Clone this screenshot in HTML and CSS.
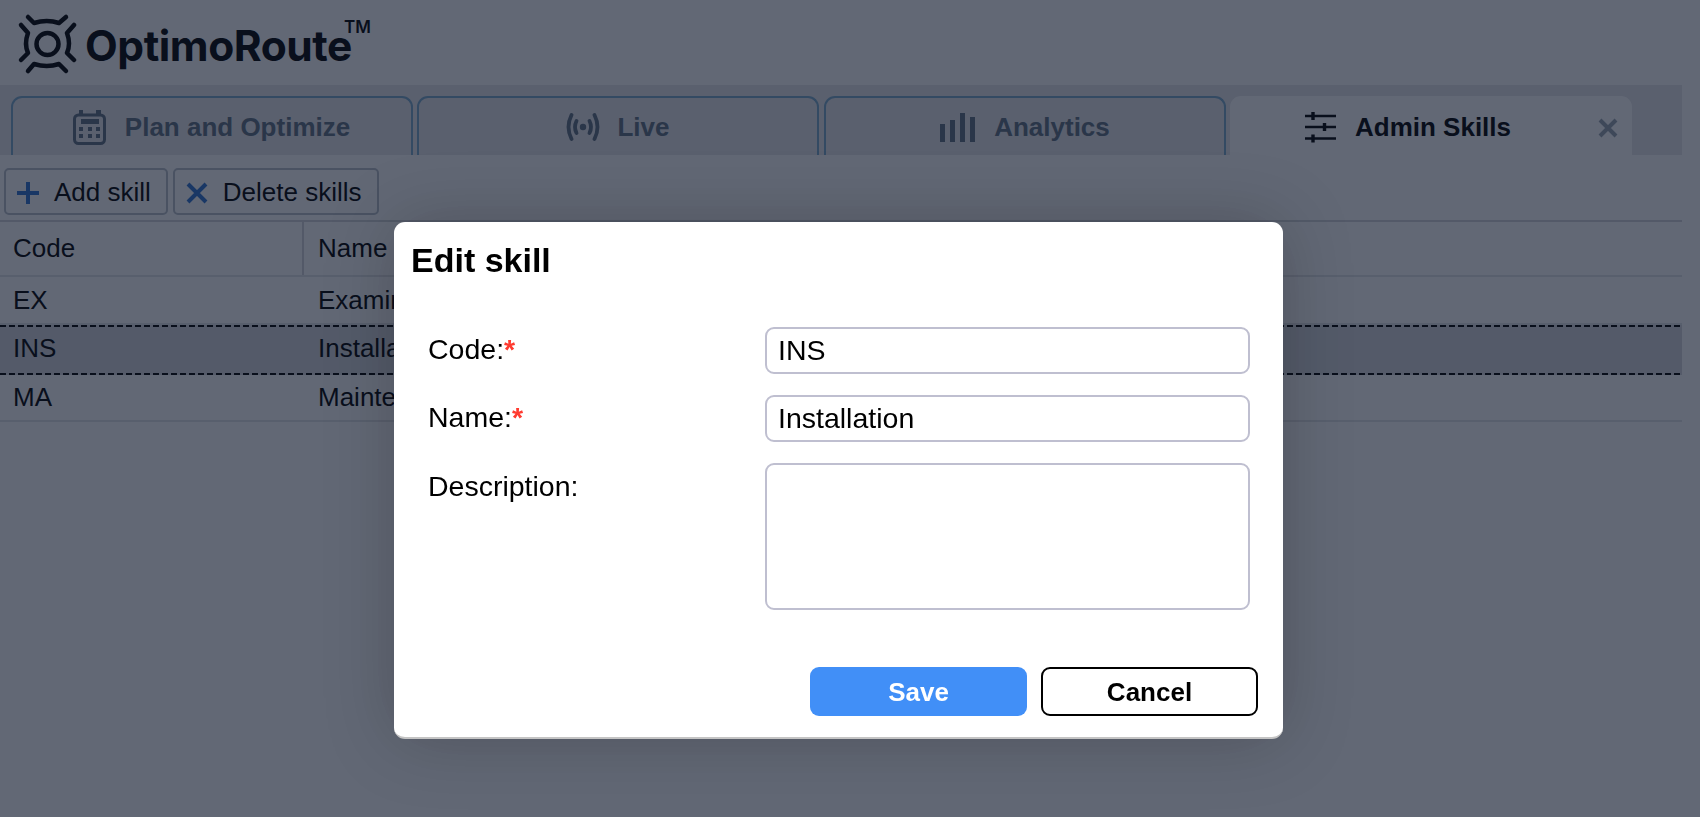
FILE: index.html
```html
<!DOCTYPE html>
<html lang="en">
<head>
<meta charset="utf-8">
<title>OptimoRoute - Admin Skills</title>
<link rel="stylesheet" href="styles.css">
</head>
<body>
<div class="app">
  <header class="brand">
    <svg class="logo-mark" viewBox="0 0 60 64" aria-hidden="true">
      <g fill="none" stroke="#000" stroke-width="4.5" stroke-linecap="round" stroke-linejoin="round">
        <circle cx="30.5" cy="32" r="11"/>
        <path d="M11 5l6 6Q30 7 42 11l7-6"/>
        <path d="M11 59l6-7Q30 56 42 52l7 7"/>
        <path d="M4 13l7 8Q7 32 11 41l-7 7"/>
        <path d="M57 13l-7 8Q54 32 50 41l7 7"/>
      </g>
    </svg>
    <span class="logo-text">OptimoRoute</span><sup class="logo-tm">TM</sup>
  </header>

  <nav class="tabs">
    <div class="tab">
      <svg class="tab-icon tab-icon-cal" viewBox="0 0 33 35" aria-hidden="true">
        <rect x="1.5" y="5" width="30" height="28.5" rx="4" fill="none" stroke="currentColor" stroke-width="3"/>
        <path d="M6 0h4v5H6zM23 0h5v5h-5z" fill="currentColor"/>
        <rect x="8" y="9" width="18" height="5" fill="currentColor"/>
        <path d="M6 17h4v4H6zM15 17h4v4h-4zM23 17h4v4h-4zM6 24h4v4H6zM15 24h4v4h-4zM23 24h4v4h-4z" fill="currentColor"/>
      </svg>
      <span>Plan and Optimize</span>
    </div>
    <div class="tab">
      <svg class="tab-icon tab-icon-live" viewBox="0 0 34 28" aria-hidden="true">
        <g fill="none" stroke="currentColor" stroke-width="3.8" stroke-linecap="round">
          <path d="M5.5 2Q-.5 14 5.5 26"/>
          <path d="M28.5 2Q34.5 14 28.5 26"/>
          <path d="M10.5 8Q7.5 14 10.5 20"/>
          <path d="M23.5 8Q26.5 14 23.5 20"/>
        </g>
        <circle cx="17" cy="14" r="3.2" fill="currentColor"/>
      </svg>
      <span>Live</span>
    </div>
    <div class="tab">
      <svg class="tab-icon tab-icon-bars" viewBox="0 0 38 30" aria-hidden="true">
        <path d="M1 12h5v18H1zM11 8h5v22h-5zM21 1h5v29h-5zM31 5h5v25h-5z" fill="currentColor"/>
      </svg>
      <span>Analytics</span>
    </div>
    <div class="tab tab-active">
      <svg class="tab-icon tab-icon-sliders" viewBox="0 0 31 32" aria-hidden="true">
        <path d="M0 5h31M0 16h31M0 27.5h31" stroke="currentColor" stroke-width="2.6" fill="none"/>
        <path d="M8 1v8M19.5 12v8M8 23.5v8" stroke="currentColor" stroke-width="3.4" fill="none"/>
      </svg>
      <span>Admin Skills</span>
      <svg class="tab-close" viewBox="0 0 20 20" aria-hidden="true">
        <path d="M2 2l16 16M18 2L2 18" stroke="currentColor" stroke-width="4" fill="none"/>
      </svg>
    </div>
  </nav>

  <main class="content">
    <div class="toolbar">
      <button class="tool" type="button">
        <svg class="tool-icon" viewBox="0 0 22 22" aria-hidden="true"><path d="M11 0v22M0 11h22" stroke="#2f74d0" stroke-width="4"/></svg>
        <span>Add skill</span>
      </button>
      <button class="tool" type="button">
        <svg class="tool-icon" viewBox="0 0 22 22" aria-hidden="true"><path d="M2 2l18 18M20 2L2 20" stroke="#2f74d0" stroke-width="4"/></svg>
        <span>Delete skills</span>
      </button>
    </div>
    <div class="table">
      <div class="row row-head"><div class="cell cell-code">Code</div><div class="cell">Name</div></div>
      <div class="row"><div class="cell cell-code-plain">EX</div><div class="cell">Examination</div></div>
      <div class="row row-selected"><div class="cell cell-code-plain">INS</div><div class="cell">Installation</div></div>
      <div class="row"><div class="cell cell-code-plain">MA</div><div class="cell">Maintenance</div></div>
    </div>
  </main>
</div>

<div class="overlay"></div>

<section class="modal">
  <h2 class="modal-title">Edit skill</h2>
  <form class="form">
    <label class="form-label">Code:<span class="req">*</span></label>
    <input class="field" type="text" value="INS">
    <label class="form-label">Name:<span class="req">*</span></label>
    <input class="field" type="text" value="Installation">
    <label class="form-label form-label-top">Description:</label>
    <textarea class="field field-area"></textarea>
  </form>
  <div class="actions">
    <button class="btn btn-primary" type="button">Save</button>
    <button class="btn btn-ghost" type="button">Cancel</button>
  </div>
</section>
</body>
</html>
```
FILE: styles.css
```css
* { box-sizing: border-box; }
html, body { margin: 0; height: 100%; overflow: hidden; }
body {
  width: 1700px;
  height: 817px;
  background: #fff;
  color: #000;
  font-family: "Liberation Sans", Arial, sans-serif;
}
.app { display: flex; flex-direction: column; height: 817px; }

.brand {
  display: flex;
  align-items: flex-start;
  height: 85px;
  padding: 12px 0 0 17px;
  color: #000;
}
.logo-mark { width: 60px; height: 64px; flex: none; }
.logo-text {
  margin: 9px 0 0 8px;
  font-family: "Inter", sans-serif;
  font-weight: 700;
  font-size: 42.5px;
  letter-spacing: -.45px;
  line-height: 50px;
}
.logo-tm {
  font-family: "Inter", sans-serif;
  font-weight: 600;
  font-size: 17px;
  line-height: 22px;
  margin: 4px 0 0 -8px;
  vertical-align: baseline;
}

.tabs {
  display: flex;
  gap: 4.5px;
  width: 1682px;
  height: 70px;
  padding: 11px 0 0 10.5px;
  background: #e7e7ea;
}
.tab {
  position: relative;
  display: flex;
  align-items: center;
  justify-content: center;
  gap: 19px;
  width: 402px;
  height: 59px;
  padding-top: 1px;
  border: 2px solid #78a8cb;
  border-bottom: 0;
  border-radius: 11px 11px 0 0;
  color: #5f6f80;
  font-size: 26px;
  font-weight: 700;
}
.tab-active {
  border: 0;
  background: #fff;
  color: #000;
  padding: 3px 46px 0 0;
}
.tab-icon { flex: none; }
.tab-icon-cal { width: 33px; height: 35px; }
.tab-icon-live { width: 34px; height: 28px; margin-right: -2px; }
.tab-icon-bars { width: 38px; height: 30px; margin-right: -2px; }
.tab-icon-sliders { width: 31px; height: 32px; }
.tab-close {
  position: absolute;
  top: 22px;
  right: 14px;
  width: 20px;
  height: 20px;
  color: #97a3b0;
}

.content { flex: 1; width: 1682px; }
.toolbar {
  display: flex;
  gap: 5px;
  height: 67px;
  padding: 13px 0 0 4px;
  border-bottom: 2px solid #d3d5d9;
}
.tool {
  display: flex;
  align-items: center;
  gap: 15px;
  height: 47px;
  padding: 2px 15px 0 11px;
  border: 2px solid #b9c0c9;
  border-radius: 5px;
  background: transparent;
  color: #000;
  font: 26px "Liberation Sans", Arial, sans-serif;
}
.tool-icon { width: 22px; height: 22px; flex: none; }

.table { display: flex; flex-direction: column; font-size: 26px; }
.row {
  display: flex;
  align-items: center;
  height: 48px;
  border-bottom: 2px solid #e2e4e7;
}
.row:last-child { height: 47px; }
.row-head { height: 55px; }
.row-selected {
  height: 50px;
  padding-bottom: 3px;
  border-bottom: 0;
  background-color: #d6d8dd;
  background-image:
    repeating-linear-gradient(90deg, #000 0 6px, transparent 6px 9px),
    repeating-linear-gradient(90deg, #000 0 6px, transparent 6px 9px);
  background-size: 100% 2px, 100% 2px;
  background-position: left top, left bottom;
  background-repeat: no-repeat;
}
.cell { height: 100%; display: flex; align-items: center; padding-left: 14px; }
.cell-code { width: 304px; padding-left: 13px; border-right: 2px solid #d3d5d9; }
.cell-code-plain { width: 304px; padding-left: 13px; }

.overlay {
  position: fixed;
  inset: 0;
  background: rgba(14, 23, 43, .65);
}

.modal {
  position: fixed;
  left: 394px;
  top: 222px;
  width: 889px;
  height: 517px;
  display: flex;
  flex-direction: column;
  background: #fff;
  border-bottom: 2px solid #c4c4c4;
  border-radius: 11px;
  box-shadow: 0 0 70px rgba(0, 0, 0, .22);
}
.modal-title {
  margin: 0;
  padding: 18px 0 0 17px;
  font-size: 34px;
  line-height: 40px;
  font-weight: 700;
}
.form {
  display: grid;
  grid-template-columns: 371px 485px;
  grid-template-rows: 47px 47px 147px;
  row-gap: 21px;
  align-items: start;
  padding: 47px 0 0 0;
}
.form-label {
  padding-left: 34px;
  font-size: 28.5px;
  line-height: 45px;
}
.form-label-top { line-height: 46px; }
.req { color: #ff3b30; font-weight: 700; }
.field {
  width: 485px;
  height: 47px;
  padding: 0 11px;
  border: 2.5px solid #bfbfd0;
  border-radius: 9px;
  background: #fff;
  color: #000;
  outline: 0;
  font: 28.5px "Liberation Sans", Arial, sans-serif;
}
.field-area { height: 147px; resize: none; display: block; }

.actions {
  display: flex;
  justify-content: flex-end;
  gap: 14px;
  padding: 57px 25px 0 0;
}
.btn {
  width: 217px;
  height: 49px;
  padding: 2px 0 0;
  border-radius: 9px;
  font: 700 26px "Liberation Sans", Arial, sans-serif;
}
.btn-primary { background: #418ff7; border: 0; color: #fff; }
.btn-ghost { background: #fff; border: 2px solid #000; color: #000; }
```
